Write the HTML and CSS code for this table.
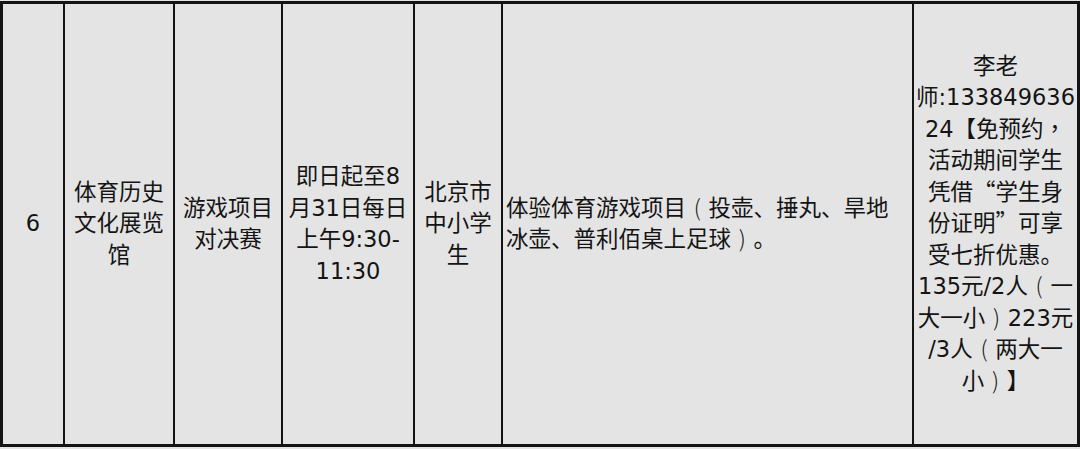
FILE: index.html
```html
<!DOCTYPE html>
<html lang="zh">
<head>
<meta charset="utf-8">
<link rel="stylesheet" href="styles.css">
</head>
<body>
<div class="row">
  <div class="cell c1"><p class="txt">6</p></div>
  <div class="cell"><p class="txt">体育历史<br>文化展览<br>馆</p></div>
  <div class="cell"><p class="txt">游戏项目<br>对决赛</p></div>
  <div class="cell"><p class="txt">即日起至8<br>月31日每日<br>上午9:30-<br>11:30</p></div>
  <div class="cell"><p class="txt">北京市<br>中小学<br>生</p></div>
  <div class="cell left"><p class="txt">体验体育游戏项目<span class="pc">(</span>投壶、捶丸、旱地<br>冰壶、普利佰桌上足球<span class="pc">)</span>。</p></div>
  <div class="cell"><p class="txt">李老<br>师:133849636<br>24【免预约<span class="cm">，</span><br>活动期间学生<br>凭借<span class="ql">“</span>学生身<br>份证明<span class="qr">”</span>可享<br>受七折优惠。<br>135元/2人<span class="pc">(</span>一<br>大一小<span class="pc">)</span>223元<br>/3人<span class="pc">(</span>两大一<br>小<span class="pc">)</span>】</p></div>
</div>
</body>
</html>
```

FILE: styles.css
```css
html, body {
  margin: 0;
  padding: 0;
  background: #e4e4e4;
}
body {
  width: 1080px;
  height: 449px;
  overflow: hidden;
}
.row {
  margin-top: 1px;
  height: 446px;
  box-sizing: border-box;
  border: 3px solid #141414;
  display: grid;
  grid-template-columns: 60px 110px 108px 132px 88px 411px 165px;
  background: #e4e4e4;
  font-family: "DejaVu Sans", "Noto Sans CJK SC", sans-serif;
  font-size: 22.5px;
  line-height: 31.5px;
  color: #141414;
}
.cell {
  border-left: 2px solid #141414;
  display: flex;
  align-items: center;
  justify-content: center;
  text-align: center;
  white-space: nowrap;
  overflow: hidden;
}
.txt {
  margin: 0;
}
.c1 {
  border-left: none;
}
.left {
  justify-content: flex-start;
  text-align: left;
  padding-left: 3px;
}
.pc, .ql, .qr, .cm {
  display: inline-block;
  width: 1em;
  line-height: 1;
  font-family: "Noto Sans CJK SC", sans-serif;
}
.pc {
  text-align: center;
  font-weight: 300;
}
.ql {
  text-align: right;
}
.qr {
  text-align: left;
}
.cm {
  font-family: "Noto Sans CJK TC", sans-serif;
  text-align: center;
}
```
